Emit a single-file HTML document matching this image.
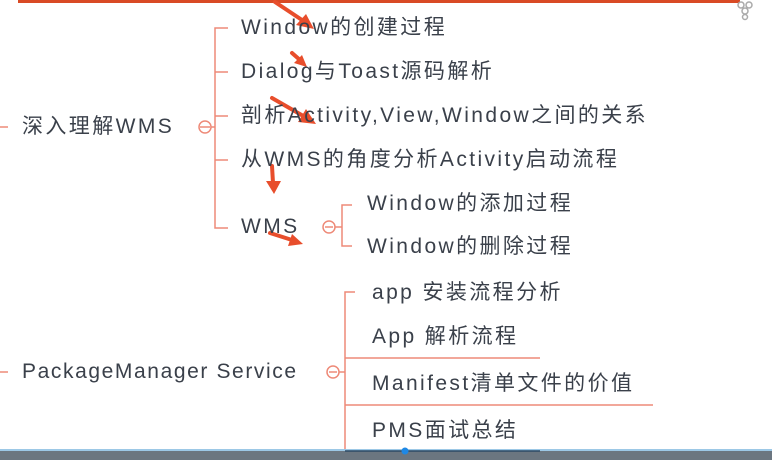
<!DOCTYPE html>
<html><head><meta charset="utf-8"><style>
html,body{margin:0;padding:0;}
body{width:772px;height:460px;position:relative;overflow:hidden;background:#fff;font-family:"Liberation Sans","Noto Sans CJK SC",sans-serif;color:#3a404a;}
.t{position:absolute;font-size:21px;line-height:24px;white-space:nowrap;letter-spacing:2.4px;}
</style></head><body>
<svg width="772" height="460" style="position:absolute;left:0;top:0">
<g stroke="#ee8a78" stroke-width="1.5" fill="none">
<rect x="18" y="0" width="722" height="3" fill="#d94a25" stroke="none"/>
<line x1="0" y1="127" x2="8" y2="127"/>
<circle cx="205" cy="127" r="6"/><line x1="200" y1="127" x2="210" y2="127"/>
<line x1="211" y1="127" x2="215" y2="127"/>
<path d="M228 28 H215 V228 H228 M215 72 H228 M215 116 H228 M215 160 H228"/>
<circle cx="329" cy="227" r="6"/><line x1="325" y1="227" x2="333" y2="227"/>
<line x1="335" y1="227" x2="342" y2="227"/>
<path d="M352 205 H342 V246 H352"/>
<line x1="0" y1="372" x2="8" y2="372"/>
<circle cx="333" cy="372" r="6"/><line x1="329" y1="372" x2="337" y2="372"/>
<line x1="339" y1="372" x2="345" y2="372"/>
<path d="M355 292 H345 V452"/>
<line x1="345" y1="358" x2="540" y2="358"/>
<line x1="345" y1="405" x2="653" y2="405"/>
</g>
<g stroke="#e84e2c" stroke-width="4" fill="#e84e2c" stroke-linecap="round">
<line x1="275" y1="2" x2="305" y2="22"/><polygon points="314,29 296,25 306,14" stroke="none"/>
<line x1="292" y1="53" x2="300" y2="60"/><polygon points="307,67 294,63 302,55" stroke="none"/>
<line x1="272" y1="98" x2="305" y2="117"/><polygon points="316,124 298,122 306,109" stroke="none"/>
<line x1="272" y1="166" x2="273" y2="183"/><polygon points="274,194 266,181 281,181" stroke="none"/>
<line x1="270" y1="233" x2="292" y2="240"/><polygon points="303,244 288,246 292,234" stroke="none"/>
</g>
<g fill="none" stroke="#aaa" stroke-width="1.5">
<circle cx="741" cy="5" r="3"/><circle cx="749" cy="5" r="3"/><circle cx="745" cy="11" r="3"/><circle cx="745" cy="17" r="2.5"/>
</g>
<rect x="0" y="450" width="772" height="10" fill="#6b7680"/>
<rect x="0" y="449" width="772" height="2" fill="#9cc8e6"/>
<line x1="345" y1="451" x2="540" y2="451" stroke="#2d4a66" stroke-width="1.5"/>
<circle cx="405" cy="451" r="3.5" fill="#1e88e5"/>
</svg>
<div class="t" style="left:22px;top:115px">深入理解WMS</div>
<div class="t" style="left:241px;top:16px">Window的创建过程</div>
<div class="t" style="left:241px;top:60px">Dialog与Toast源码解析</div>
<div class="t" style="left:241px;top:104px">剖析Activity,View,Window之间的关系</div>
<div class="t" style="left:241px;top:148px">从WMS的角度分析Activity启动流程</div>
<div class="t" style="left:241px;top:215px">WMS</div>
<div class="t" style="left:367px;top:192px">Window的添加过程</div>
<div class="t" style="left:367px;top:235px">Window的删除过程</div>
<div class="t" style="left:22px;top:360px;letter-spacing:1.6px">PackageManager Service</div>
<div class="t" style="left:372px;top:281px">app 安装流程分析</div>
<div class="t" style="left:372px;top:325px">App 解析流程</div>
<div class="t" style="left:372px;top:372px">Manifest清单文件的价值</div>
<div class="t" style="left:372px;top:419px">PMS面试总结</div>
</body></html>
